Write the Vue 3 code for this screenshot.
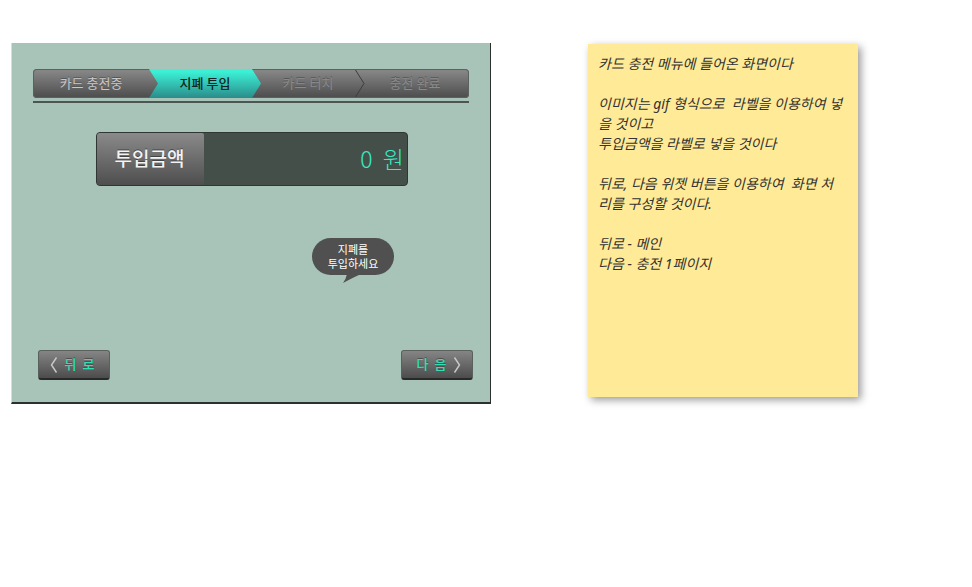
<script setup>
import { ref } from 'vue'

const steps = ['카드 충전중', '지폐 투입', '카드 터치', '충전 완료']
const current = 1
const amount = ref(0)
const hint = '지폐를\n투입하세요'
const note = `카드 충전 메뉴에 들어온 화면이다

이미지는 gif 형식으로  라벨을 이용하여 넣을 것이고
투입금액을 라벨로 넣을 것이다

뒤로, 다음 위젯 버튼을 이용하여  화면 처리를 구성할 것이다.

뒤로 - 메인
다음 - 충전 1페이지`
</script>

<template>
  <main class="page">
    <section class="kiosk">
      <nav class="progress">
        <ol class="steps">
          <li
            v-for="(step, i) in steps"
            :key="step"
            class="step"
            :class="{ done: i < current, active: i === current, last: i === steps.length - 1 }"
          >
            <svg v-if="i === 2" class="divider" viewBox="0 0 10 29" aria-hidden="true">
              <path d="M0.5 1 L9 14.5 L0.5 28" fill="none" stroke="#3d3d3d" />
            </svg>
            <span class="step-text">{{ step }}</span>
          </li>
        </ol>
      </nav>

      <div class="amount">
        <label class="amount-label" for="amount">투입금액</label>
        <output id="amount" class="amount-value">{{ amount + '  원' }}</output>
      </div>

      <div class="bubble">
        <p class="bubble-text">{{ hint }}</p>
        <svg class="tail" viewBox="0 0 18 9" aria-hidden="true">
          <path d="M4 0 H18 Q9 4 0 9 Q3 5 4 0 Z" fill="#505050" />
        </svg>
      </div>

      <div class="actions">
        <button type="button" class="nav-button back">
          <svg class="arrow" viewBox="0 0 8 18" aria-hidden="true">
            <path d="M6.5 1.5 L1.5 9 L6.5 16.5" fill="none" stroke="#c9c9c9" stroke-width="1.4" />
          </svg>
          <span class="nav-text">{{ '뒤  로' }}</span>
        </button>
        <button type="button" class="nav-button next">
          <span class="nav-text">{{ '다  음' }}</span>
          <svg class="arrow" viewBox="0 0 8 18" aria-hidden="true">
            <path d="M1.5 1.5 L6.5 9 L1.5 16.5" fill="none" stroke="#c9c9c9" stroke-width="1.4" />
          </svg>
        </button>
      </div>
    </section>

    <aside class="note">{{ note }}</aside>
  </main>
</template>

<style>
body {
  background: #fff;
}
</style>

<style scoped>
.page {
  display: flex;
  align-items: flex-start;
  gap: 97px;
  padding: 43px 11px;
  font-family: "Noto Sans CJK KR", sans-serif;
}

.kiosk {
  box-sizing: border-box;
  flex: 0 1 480px;
  padding: 26px 17px 22px 21px;
  border: solid #2b302e;
  border-width: 0 1px 2px 0;
  border-left: 1px solid #d3dfda;
  background: #a8c3b8;
}

.progress {
  margin-right: 4px;
  padding-bottom: 3px;
  border-bottom: 2px solid #4b5552;
}

.steps {
  display: grid;
  grid-template-columns: 116fr 103fr 103fr 114fr;
  box-sizing: border-box;
  height: 29px;
  margin: 0;
  padding: 0;
  list-style: none;
  border-radius: 4px;
  background: linear-gradient(#8a8a8a, #4c4c4c);
  box-shadow: inset 0 0 0 1px #5c605e;
}

.step {
  position: relative;
  display: flex;
  align-items: center;
  justify-content: center;
  padding: 0 0 2px 9px;
  color: #8a8a8a;
  font-size: 13px;
  line-height: 20px;
  text-shadow: 0 -1px 0 #575757;
}

.step.done {
  padding-left: 0;
  color: #c8c8c8;
}

.step.active {
  margin-right: -9px;
  padding-left: 0;
  color: #0d2420;
  font-weight: 500;
  text-shadow: none;
  background: linear-gradient(#3bf0d5 10%, #2b8c8b);
  clip-path: polygon(0 0, calc(100% - 9px) 0, 100% 50%, calc(100% - 9px) 100%, 0 100%, 9px 50%);
}

.step.last {
  padding-left: 6px;
}

.divider {
  position: absolute;
  top: 0;
  right: -10px;
  width: 10px;
  height: 29px;
}

.amount {
  display: flex;
  box-sizing: border-box;
  height: 54px;
  margin: 29px 65px 0 63px;
  border: 1px solid #2f3633;
  border-radius: 4px;
  background: #454f49;
  overflow: hidden;
}

.amount-label {
  display: flex;
  align-items: center;
  justify-content: center;
  box-sizing: border-box;
  flex: 0 0 107px;
  padding: 0 2px 4px 0;
  border-radius: 0 2px 2px 0;
  background: linear-gradient(#8a8a8a, #4e4e4e);
  color: #f4f4f4;
  font-size: 19px;
  font-weight: 500;
  text-shadow: 0 -1px 0 #444;
}

.amount-value {
  flex: 1;
  padding-right: 3px;
  color: #3be8c3;
  font-size: 23px;
  font-weight: 300;
  line-height: 50px;
  text-align: right;
  white-space: pre;
}

.bubble {
  position: relative;
  box-sizing: border-box;
  width: 82px;
  margin: 52px 0 0 279px;
  padding: 4px 0 5px;
  border-radius: 19px;
  background: #505050;
}

.bubble-text {
  margin: 0;
  color: #fff;
  font-size: 11px;
  line-height: 14px;
  text-align: center;
  white-space: pre-line;
}

.tail {
  position: absolute;
  top: 36px;
  left: 31px;
  width: 18px;
  height: 9px;
}

.actions {
  display: flex;
  justify-content: space-between;
  margin: 75px 0 0 5px;
}

.nav-button {
  display: flex;
  align-items: center;
  justify-content: center;
  box-sizing: border-box;
  width: 72px;
  height: 30px;
  padding: 0;
  border: 1px solid #5a605d;
  border-bottom: 2px solid #292929;
  border-radius: 3px;
  background: linear-gradient(#858585, #4c4c4c);
  color: #2fe0b4;
  font-family: inherit;
  font-size: 13px;
  font-weight: 500;
  line-height: 20px;
  text-shadow: 0 -1px 0 #505050;
  gap: 7px;
  cursor: pointer;
}

.nav-button.back {
  padding-right: 4px;
}

.nav-button.next {
  padding-left: 4px;
}

.nav-text {
  padding-bottom: 2px;
  white-space: pre;
}

.arrow {
  width: 8px;
  height: 18px;
}

.note {
  box-sizing: border-box;
  flex: 0 1 270px;
  min-height: 353px;
  margin-top: 1px;
  padding: 10px 13px 9px 10px;
  background: #ffea97;
  box-shadow: 3px 3px 8px rgba(0, 0, 0, 0.4);
  color: #333;
  font-family: "Noto Sans", "Noto Sans CJK KR", sans-serif;
  font-size: 14px;
  font-style: italic;
  line-height: 20px;
  white-space: pre-wrap;
}
</style>
